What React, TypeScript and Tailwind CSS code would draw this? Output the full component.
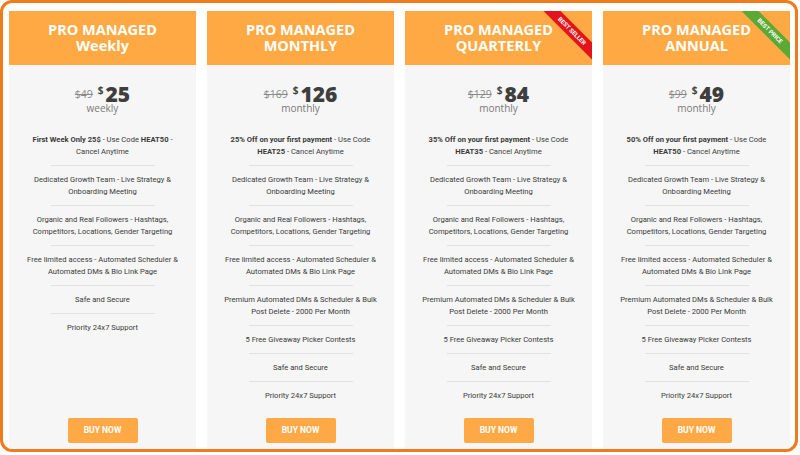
import React from 'react';

type Plan = {
  title: string;
  sub: string;
  old: string;
  price: string;
  period: string;
  promo: React.ReactNode;
  extras: boolean;
  ribbon?: { label: string; color: string };
};

const plans: Plan[] = [
  {
    title: 'PRO MANAGED',
    sub: 'Weekly',
    old: '$49',
    price: '25',
    period: 'weekly',
    promo: (
      <>
        <b>First Week Only 25$</b> - Use Code <b>HEAT50</b> - Cancel Anytime
      </>
    ),
    extras: false,
  },
  {
    title: 'PRO MANAGED',
    sub: 'MONTHLY',
    old: '$169',
    price: '126',
    period: 'monthly',
    promo: (
      <>
        <b>25% Off on your first payment</b> - Use Code <b>HEAT25</b> - Cancel Anytime
      </>
    ),
    extras: true,
  },
  {
    title: 'PRO MANAGED',
    sub: 'QUARTERLY',
    old: '$129',
    price: '84',
    period: 'monthly',
    promo: (
      <>
        <b>35% Off on your first payment</b> - Use Code <b>HEAT35</b> - Cancel Anytime
      </>
    ),
    extras: true,
    ribbon: { label: 'BEST SELLER', color: 'bg-[#e3141c]' },
  },
  {
    title: 'PRO MANAGED',
    sub: 'ANNUAL',
    old: '$99',
    price: '49',
    period: 'monthly',
    promo: (
      <>
        <b>50% Off on your first payment</b> - Use Code <b>HEAT50</b> - Cancel Anytime
      </>
    ),
    extras: true,
    ribbon: { label: 'BEST PRICE', color: 'bg-[#5ba834]' },
  },
];

function Divider() {
  return <div className="mx-auto w-[104px] h-px bg-[#e2e2e2]" />;
}

function Feature({ children }: { children: React.ReactNode }) {
  return <div className="px-[13px] pt-[8px] pb-[7px] text-center text-[7.6px] leading-[12px] text-[#3a3a3a]">{children}</div>;
}

function Card({ plan }: { plan: Plan }) {
  const features: React.ReactNode[] = [
    plan.promo,
    'Dedicated Growth Team - Live Strategy & Onboarding Meeting',
    'Organic and Real Followers - Hashtags, Competitors, Locations, Gender Targeting',
    'Free limited access - Automated Scheduler & Automated DMs & Bio Link Page',
  ];
  if (plan.extras) {
    features.push('Premium Automated DMs & Scheduler & Bulk Post Delete - 2000 Per Month');
    features.push('5 Free Giveaway Picker Contests');
  }
  features.push('Safe and Secure');
  features.push('Priority 24x7 Support');

  return (
    <div className="w-[187px] flex flex-col bg-[#f6f6f6]">
      <div className="relative shrink-0 h-[54px] bg-[#fea943] flex flex-col items-center justify-center text-white font-bold text-[14.5px] leading-[16px] font-['Open_Sans',sans-serif] overflow-hidden">
        <div>{plan.title}</div>
        <div>{plan.sub}</div>
        {plan.ribbon && (
          <div className="absolute top-0 right-0 w-[54px] h-[54px] overflow-hidden">
            <div
              className={`absolute top-[14px] right-[-30px] w-[100px] h-[12px] rotate-45 ${plan.ribbon.color} flex items-center justify-center text-[6px] leading-[12px] font-bold text-white font-['Roboto',sans-serif]`}
            >
              {plan.ribbon.label}
            </div>
          </div>
        )}
      </div>
      <div className="mt-[20px] flex justify-center items-end font-['Open_Sans',sans-serif]">
        <span className="text-[10.5px] leading-[11px] text-[#8a8a8a] line-through mb-[3px]">{plan.old}</span>
        <span className="ml-[5px] self-start text-[10px] leading-[10px] font-bold text-[#444]">$</span>
        <span className="ml-[2px] text-[21px] leading-[18px] font-extrabold text-[#3e3e3e]">{plan.price}</span>
      </div>
      <div className="text-center text-[10px] leading-[10px] text-[#7a7a7a] font-['Open_Sans',sans-serif]">{plan.period}</div>
      <div className="mt-[13px] font-['Roboto',sans-serif]">
        {features.map((f, i) => (
          <div key={i}>
            {i > 0 && <Divider />}
            <Feature>{f}</Feature>
          </div>
        ))}
      </div>
      <div className="mt-auto mb-[6px] flex justify-center">
        <button className="w-[70px] h-[25px] rounded-[2px] bg-[#fea945] text-white text-[8.5px] font-bold font-['Roboto',sans-serif]">
          BUY NOW
        </button>
      </div>
    </div>
  );
}

export default function App() {
  return (
    <div className="w-[800px] h-[455px] bg-white">
      <div className="w-[798px] h-[452px] border-[3px] border-[#ee7b1c] rounded-[12px] pt-[8px] pl-[6px] flex gap-[11px] overflow-hidden">
        {plans.map((p, i) => (
          <Card key={i} plan={p} />
        ))}
      </div>
    </div>
  );
}
